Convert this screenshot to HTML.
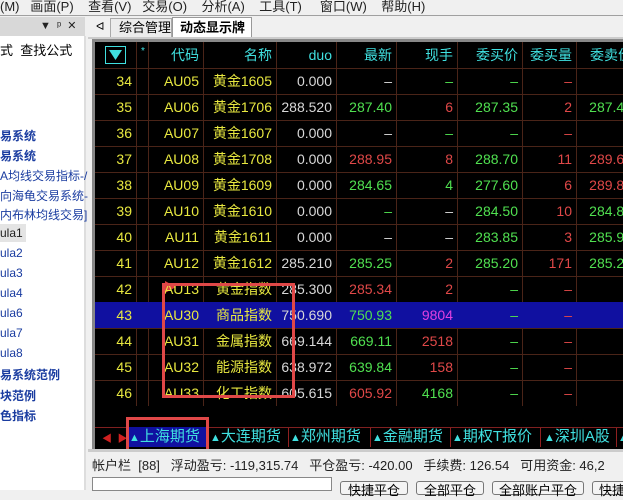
<!DOCTYPE html><html><head><meta charset="utf-8"><style>
*{margin:0;padding:0;box-sizing:border-box}
body{width:623px;height:490px;overflow:hidden;background:#f0f0f0;font-family:"Liberation Sans","Noto Sans CJK SC",sans-serif;font-size:12px;position:relative;color:#000}
.a{position:absolute;white-space:nowrap}
.c{position:absolute;text-align:right;font-size:14px;line-height:26px;white-space:nowrap}
.y{color:#e8e840}.g{color:#50e050}.r{color:#e04848}.w{color:#d8d8d8}.cy{color:#40e0e0}.m{color:#e040e0}
.lt{color:#1a3ca0;font-weight:bold;font-size:12px}
.bt{position:absolute;top:428px;color:#40e0e0;font-size:15px;line-height:18px;white-space:nowrap}
.bt b{font-weight:normal;font-size:11px}
</style></head><body>
<div class="a" style="left:0;top:-4px;font-size:13px;color:#222">(M)&nbsp;&nbsp;&nbsp;画面(P)&nbsp;&nbsp;&nbsp;&nbsp;查看(V)&nbsp;&nbsp;&nbsp;交易(O)&nbsp;&nbsp;&nbsp;&nbsp;分析(A)&nbsp;&nbsp;&nbsp;&nbsp;工具(T)&nbsp;&nbsp;&nbsp;&nbsp;&nbsp;窗口(W)&nbsp;&nbsp;&nbsp;&nbsp;帮助(H)</div>
<div class="a" style="left:0;top:15px;width:623px;height:1px;background:#a0a0a0"></div>
<div class="a" style="left:0;top:17px;width:85px;height:19px;background:#d8d8d8"></div>
<div class="a" style="left:40px;top:19px;font-size:11px;color:#222">▼&nbsp;&nbsp;ᵖ&nbsp;&nbsp;✕</div>
<div class="a" style="left:0;top:36px;width:85px;height:454px;background:#fff"></div>
<div class="a" style="left:0;top:40px;font-size:13px">式&nbsp;&nbsp;查找公式</div>
<div class="a" style="left:84px;top:36px;width:2px;height:454px;background:#ddd"></div>
<div class="a lt" style="left:0;top:127px">易系统</div>
<div class="a lt" style="left:0;top:147px">易系统</div>
<div class="a" style="left:0;top:167px;color:#1a3ca0">A均线交易指标-/</div>
<div class="a" style="left:0;top:187px;color:#1a3ca0">向海龟交易系统-</div>
<div class="a" style="left:0;top:206px;color:#1a3ca0">内布林均线交易]</div>
<div class="a" style="left:0;top:224px;width:26px;height:18px;background:#e4e4e4"></div>
<div class="a" style="left:0;top:226px;color:#222">ula1</div>
<div class="a" style="left:0;top:246px;color:#1a3ca0">ula2</div>
<div class="a" style="left:0;top:266px;color:#1a3ca0">ula3</div>
<div class="a" style="left:0;top:286px;color:#1a3ca0">ula4</div>
<div class="a" style="left:0;top:306px;color:#1a3ca0">ula6</div>
<div class="a" style="left:0;top:326px;color:#1a3ca0">ula7</div>
<div class="a" style="left:0;top:346px;color:#1a3ca0">ula8</div>
<div class="a lt" style="left:0;top:366px">易系统范例</div>
<div class="a lt" style="left:0;top:387px">块范例</div>
<div class="a lt" style="left:0;top:407px">色指标</div>
<div class="a" style="left:96px;top:20px;font-size:11px">ᐊ</div>
<div class="a" style="left:110px;top:18px;width:62px;height:19px;border:1px solid #aaa;border-bottom:none;background:#ececec;padding-left:8px;font-size:13px;line-height:18px">综合管理</div>
<div class="a" style="left:172px;top:17px;width:80px;height:20px;border:1px solid #999;border-bottom:none;background:#fff;padding-left:7px;font-size:13px;font-weight:bold;line-height:19px">动态显示牌</div>
<div class="a" style="left:88px;top:37px;width:535px;height:2px;background:#ccc"></div>
<div class="a" style="left:92px;top:39px;width:531px;height:410px;background:#000;border-left:3px solid #888;border-top:3px solid #888"></div>
<svg class="a" style="left:95px;top:42px" width="528" height="364">
<g stroke="#4a2418" stroke-width="1">
<line x1="41.5" y1="0" x2="41.5" y2="364"/><line x1="53.5" y1="0" x2="53.5" y2="364"/><line x1="108.5" y1="0" x2="108.5" y2="364"/><line x1="181.5" y1="0" x2="181.5" y2="364"/><line x1="241.5" y1="0" x2="241.5" y2="364"/><line x1="301.5" y1="0" x2="301.5" y2="364"/><line x1="362.5" y1="0" x2="362.5" y2="364"/><line x1="427.5" y1="0" x2="427.5" y2="364"/><line x1="481.5" y1="0" x2="481.5" y2="364"/>
</g>
<rect x="0" y="260" width="528" height="26" fill="#1010a0"/>
<g stroke="#4a2418"><line x1="0" y1="26.5" x2="528" y2="26.5"/><line x1="0" y1="52.5" x2="528" y2="52.5"/><line x1="0" y1="78.5" x2="528" y2="78.5"/><line x1="0" y1="104.5" x2="528" y2="104.5"/><line x1="0" y1="130.5" x2="528" y2="130.5"/><line x1="0" y1="156.5" x2="528" y2="156.5"/><line x1="0" y1="182.5" x2="528" y2="182.5"/><line x1="0" y1="208.5" x2="528" y2="208.5"/><line x1="0" y1="234.5" x2="528" y2="234.5"/><line x1="0" y1="286.5" x2="528" y2="286.5"/><line x1="0" y1="312.5" x2="528" y2="312.5"/><line x1="0" y1="338.5" x2="528" y2="338.5"/></g>
<rect x="10.5" y="4.5" width="20" height="17" fill="none" stroke="#40e0e0"/><polygon points="14,8 27,8 20.5,18" fill="#40e0e0"/>
<polygon points="70,239 70,251 81,245" fill="#e04040"/>
</svg>
<div class="a" style="left:141px;top:46px;color:#40e0e0;font-size:10px">*</div>
<div id="t"></div>
<div class="a" style="left:162px;top:283px;width:133px;height:115px;border:3px solid #e04848"></div>
<div class="a" style="left:95px;top:427px;width:528px;height:20px;background:#000;border-top:1px solid #802020"></div>
<div class="a" style="left:102px;top:430px;color:#d02020;font-size:10px">◀&nbsp;&nbsp;▶</div>
<div class="a" style="left:128px;top:427px;width:80px;height:20px;background:#1010a0"></div>
<div class="bt" style="left:129px"><b>▲</b>上海期货</div>
<div class="bt" style="left:210px"><b>▲</b>大连期货</div>
<div class="bt" style="left:290px"><b>▲</b>郑州期货</div>
<div class="bt" style="left:372px"><b>▲</b>金融期货</div>
<div class="bt" style="left:452px"><b>▲</b>期权T报价</div>
<div class="bt" style="left:544px"><b>▲</b>深圳A股</div>
<div class="bt" style="left:618px"><b>▲</b></div>
<div class="a" style="left:208px;top:428px;width:1px;height:19px;background:#902020;box-shadow:80px 0 #902020,162px 0 #902020,242px 0 #902020,332px 0 #902020,408px 0 #902020"></div>
<div class="a" style="left:126px;top:417px;width:83px;height:35px;border:3px solid #e04848"></div>
<div class="a" style="left:88px;top:449px;width:535px;height:3px;background:#ccc"></div>
<div class="a" style="left:92px;top:455px;font-size:13px;color:#222">帐户栏&nbsp;&nbsp;[88]&nbsp;&nbsp;&nbsp;浮动盈亏:&nbsp;-119,315.74&nbsp;&nbsp;&nbsp;平仓盈亏:&nbsp;-420.00&nbsp;&nbsp;&nbsp;手续费:&nbsp;126.54&nbsp;&nbsp;&nbsp;可用资金:&nbsp;46,2</div>
<div class="a" style="left:92px;top:477px;width:240px;height:14px;background:#fff;border:1px solid #888"></div>
<div class="a" style="left:340px;top:481px;width:68px;height:14px;border:1px solid #777;border-radius:3px;background:#f4f4f4;text-align:center;font-size:13px;line-height:18px">快捷平仓</div>
<div class="a" style="left:416px;top:481px;width:68px;height:14px;border:1px solid #777;border-radius:3px;background:#f4f4f4;text-align:center;font-size:13px;line-height:18px">全部平仓</div>
<div class="a" style="left:492px;top:481px;width:92px;height:14px;border:1px solid #777;border-radius:3px;background:#f4f4f4;text-align:center;font-size:13px;line-height:18px">全部账户平仓</div>
<div class="a" style="left:592px;top:481px;width:40px;height:14px;border:1px solid #777;border-radius:3px;background:#f4f4f4;font-size:13px;line-height:18px;padding-left:6px">快捷</div>
<script>
var cols=[[95,41],[148,55],[203,73],[276,60],[336,60],[396,61],[457,65],[522,54],[576,60]];
var H=[["cy",""],["cy","代码"],["cy","名称"],["cy","duo"],["cy","最新"],["cy","现手"],["cy","委买价"],["cy","委买量"],["cy","委卖价"]];
var D="–";
var R=[
["34","AU05","黄金1605","0.000",["w",D],["g",D],["g",D],["r",D],["g",D]],
["35","AU06","黄金1706","288.520",["g","287.40"],["r","6"],["g","287.35"],["r","2"],["g","287.45"]],
["36","AU07","黄金1607","0.000",["w",D],["g",D],["g",D],["r",D],["g",D]],
["37","AU08","黄金1708","0.000",["r","288.95"],["r","8"],["g","288.70"],["r","11"],["r","289.65"]],
["38","AU09","黄金1609","0.000",["g","284.65"],["g","4"],["g","277.60"],["r","6"],["r","289.85"]],
["39","AU10","黄金1610","0.000",["g",D],["w",D],["g","284.50"],["r","10"],["g","284.85"]],
["40","AU11","黄金1611","0.000",["w",D],["w",D],["g","283.85"],["r","3"],["g","285.95"]],
["41","AU12","黄金1612","285.210",["g","285.25"],["r","2"],["g","285.20"],["r","171"],["g","285.25"]],
["42","AU13","黄金指数","285.300",["r","285.34"],["r","2"],["g",D],["r",D],["g",D]],
["43","AU30","商品指数","750.690",["g","750.93"],["m","9804"],["g",D],["r",D],["g",D]],
["44","AU31","金属指数","669.144",["g","669.11"],["r","2518"],["g",D],["r",D],["g",D]],
["45","AU32","能源指数","638.972",["g","639.84"],["r","158"],["g",D],["r",D],["g",D]],
["46","AU33","化工指数","605.615",["r","605.92"],["g","4168"],["g",D],["r",D],["g",D]]];
var h="";
function cell(i,top,cls,txt){var c=cols[i];h+='<div class="c '+cls+'" style="left:'+c[0]+'px;top:'+top+'px;width:'+(c[1]-4)+'px">'+txt+'</div>';}
H.forEach(function(x,i){if(i>0)cell(i,42,x[0],x[1]);});
R.forEach(function(r,k){var t=68+k*26;cell(0,t,"y",r[0]);cell(1,t,"y",r[1]);cell(2,t,"y",r[2]);cell(3,t,"w",r[3]);for(var j=4;j<9;j++)cell(j,t,r[j][0],r[j][1]);});
document.getElementById("t").innerHTML=h;
</script>
</body></html>
